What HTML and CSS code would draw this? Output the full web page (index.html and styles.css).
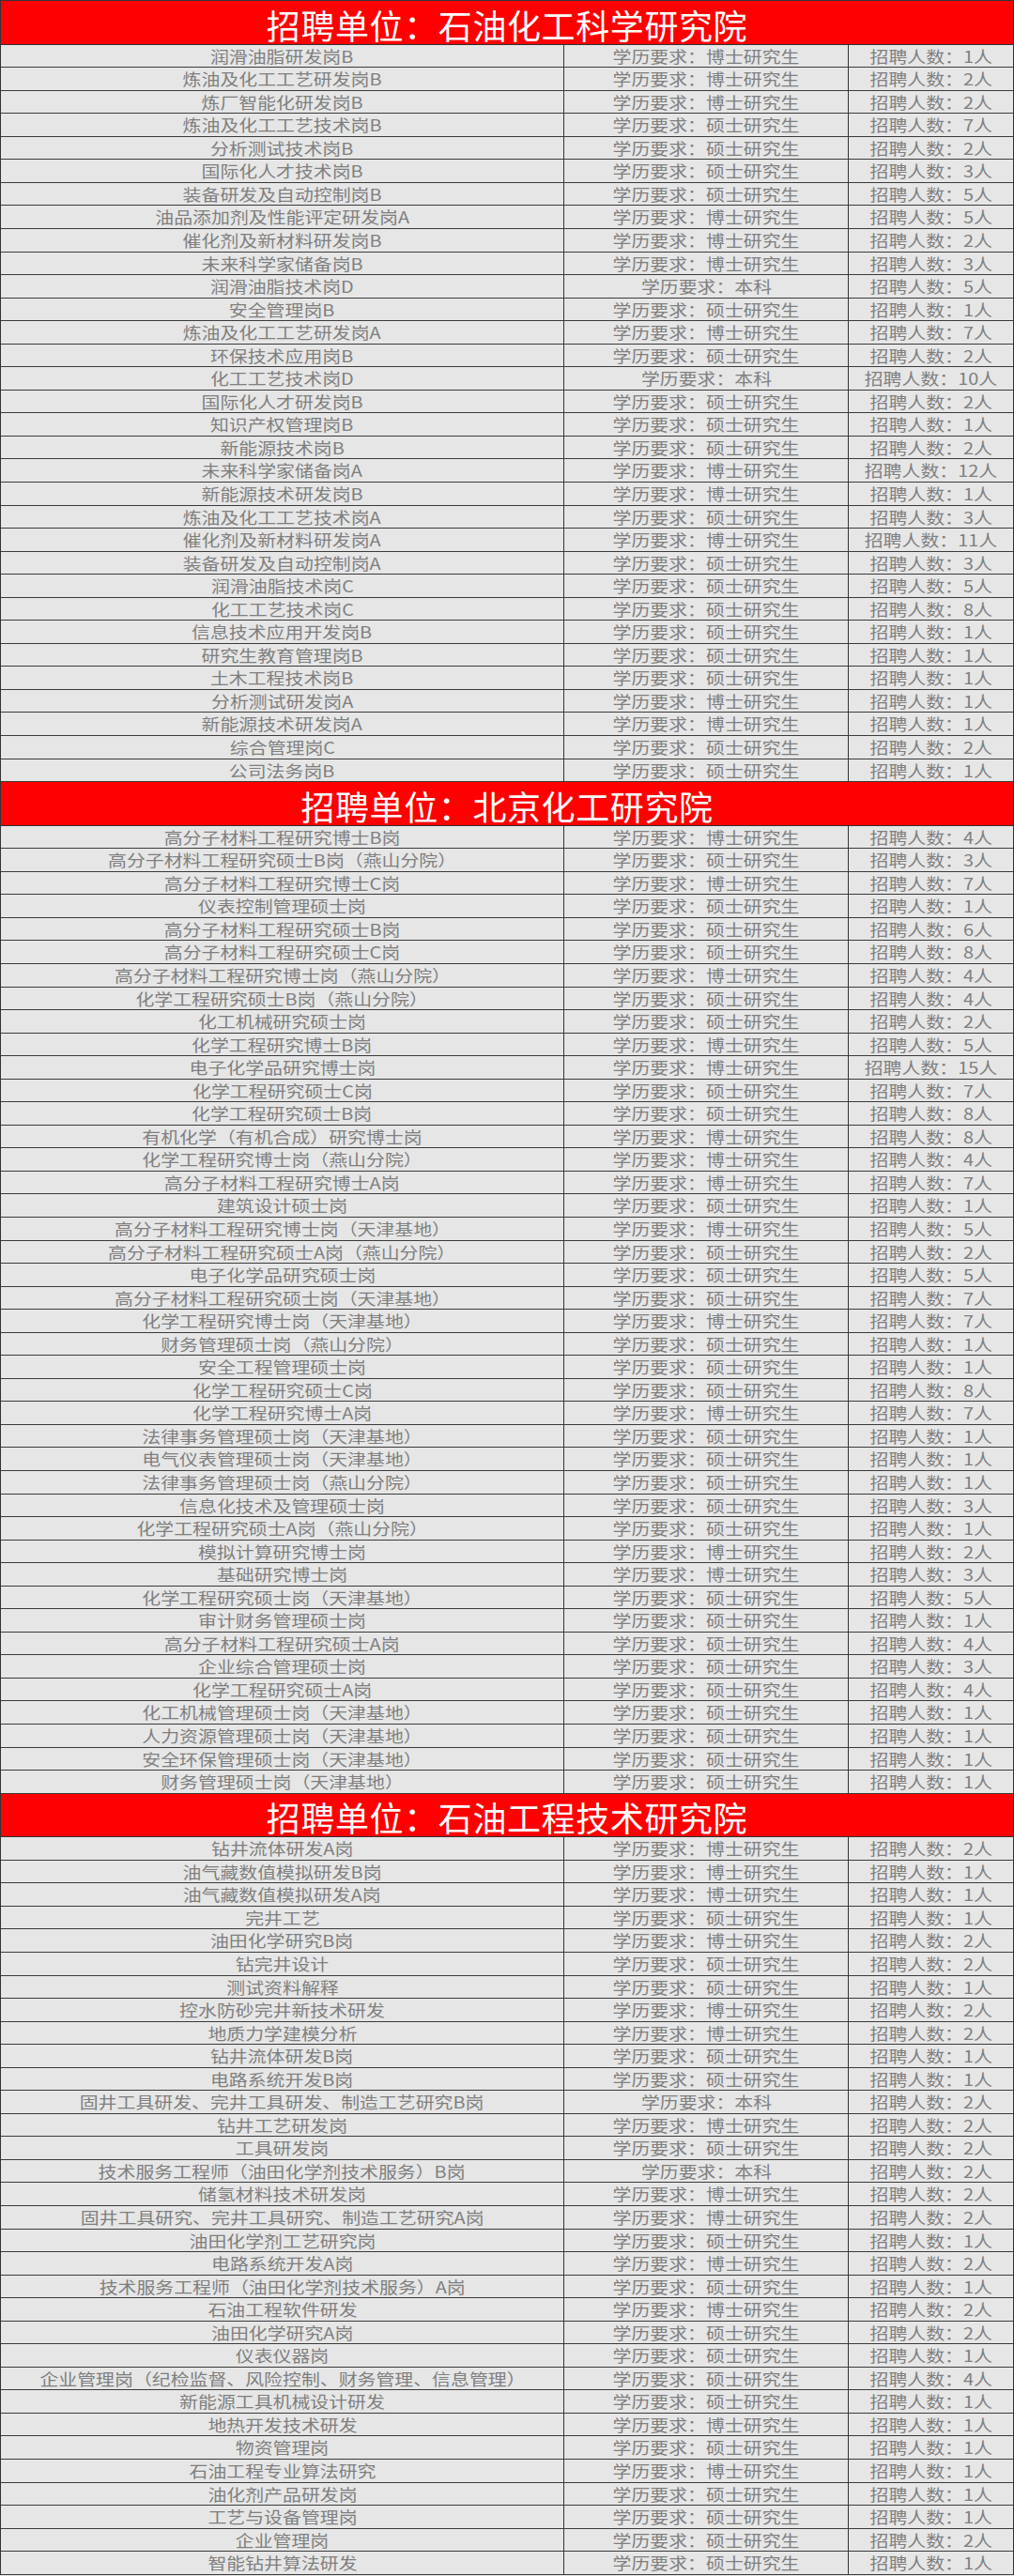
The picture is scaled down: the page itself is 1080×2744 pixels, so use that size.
FILE: index.html
```html
<!DOCTYPE html>
<html lang="zh-CN">
<head>
<meta charset="utf-8">
<title>招聘单位</title>
<link rel="stylesheet" href="styles.css">
</head>
<body>
<div class="sheet">
  <div class="head"><span>招聘单位：石油化工科学研究院</span></div>
  <div class="row"><div class="c1"><span>润滑油脂研发岗B</span></div><div class="c2"><span>学历要求：博士研究生</span></div><div class="c3"><span>招聘人数：1人</span></div></div>
  <div class="row"><div class="c1"><span>炼油及化工工艺研发岗B</span></div><div class="c2"><span>学历要求：博士研究生</span></div><div class="c3"><span>招聘人数：2人</span></div></div>
  <div class="row"><div class="c1"><span>炼厂智能化研发岗B</span></div><div class="c2"><span>学历要求：博士研究生</span></div><div class="c3"><span>招聘人数：2人</span></div></div>
  <div class="row"><div class="c1"><span>炼油及化工工艺技术岗B</span></div><div class="c2"><span>学历要求：硕士研究生</span></div><div class="c3"><span>招聘人数：7人</span></div></div>
  <div class="row"><div class="c1"><span>分析测试技术岗B</span></div><div class="c2"><span>学历要求：硕士研究生</span></div><div class="c3"><span>招聘人数：2人</span></div></div>
  <div class="row"><div class="c1"><span>国际化人才技术岗B</span></div><div class="c2"><span>学历要求：硕士研究生</span></div><div class="c3"><span>招聘人数：3人</span></div></div>
  <div class="row"><div class="c1"><span>装备研发及自动控制岗B</span></div><div class="c2"><span>学历要求：硕士研究生</span></div><div class="c3"><span>招聘人数：5人</span></div></div>
  <div class="row"><div class="c1"><span>油品添加剂及性能评定研发岗A</span></div><div class="c2"><span>学历要求：博士研究生</span></div><div class="c3"><span>招聘人数：5人</span></div></div>
  <div class="row"><div class="c1"><span>催化剂及新材料研发岗B</span></div><div class="c2"><span>学历要求：博士研究生</span></div><div class="c3"><span>招聘人数：2人</span></div></div>
  <div class="row"><div class="c1"><span>未来科学家储备岗B</span></div><div class="c2"><span>学历要求：博士研究生</span></div><div class="c3"><span>招聘人数：3人</span></div></div>
  <div class="row"><div class="c1"><span>润滑油脂技术岗D</span></div><div class="c2"><span>学历要求：本科</span></div><div class="c3"><span>招聘人数：5人</span></div></div>
  <div class="row"><div class="c1"><span>安全管理岗B</span></div><div class="c2"><span>学历要求：硕士研究生</span></div><div class="c3"><span>招聘人数：1人</span></div></div>
  <div class="row"><div class="c1"><span>炼油及化工工艺研发岗A</span></div><div class="c2"><span>学历要求：博士研究生</span></div><div class="c3"><span>招聘人数：7人</span></div></div>
  <div class="row"><div class="c1"><span>环保技术应用岗B</span></div><div class="c2"><span>学历要求：硕士研究生</span></div><div class="c3"><span>招聘人数：2人</span></div></div>
  <div class="row"><div class="c1"><span>化工工艺技术岗D</span></div><div class="c2"><span>学历要求：本科</span></div><div class="c3"><span>招聘人数：10人</span></div></div>
  <div class="row"><div class="c1"><span>国际化人才研发岗B</span></div><div class="c2"><span>学历要求：硕士研究生</span></div><div class="c3"><span>招聘人数：2人</span></div></div>
  <div class="row"><div class="c1"><span>知识产权管理岗B</span></div><div class="c2"><span>学历要求：硕士研究生</span></div><div class="c3"><span>招聘人数：1人</span></div></div>
  <div class="row"><div class="c1"><span>新能源技术岗B</span></div><div class="c2"><span>学历要求：硕士研究生</span></div><div class="c3"><span>招聘人数：2人</span></div></div>
  <div class="row"><div class="c1"><span>未来科学家储备岗A</span></div><div class="c2"><span>学历要求：博士研究生</span></div><div class="c3"><span>招聘人数：12人</span></div></div>
  <div class="row"><div class="c1"><span>新能源技术研发岗B</span></div><div class="c2"><span>学历要求：博士研究生</span></div><div class="c3"><span>招聘人数：1人</span></div></div>
  <div class="row"><div class="c1"><span>炼油及化工工艺技术岗A</span></div><div class="c2"><span>学历要求：硕士研究生</span></div><div class="c3"><span>招聘人数：3人</span></div></div>
  <div class="row"><div class="c1"><span>催化剂及新材料研发岗A</span></div><div class="c2"><span>学历要求：博士研究生</span></div><div class="c3"><span>招聘人数：11人</span></div></div>
  <div class="row"><div class="c1"><span>装备研发及自动控制岗A</span></div><div class="c2"><span>学历要求：硕士研究生</span></div><div class="c3"><span>招聘人数：3人</span></div></div>
  <div class="row"><div class="c1"><span>润滑油脂技术岗C</span></div><div class="c2"><span>学历要求：硕士研究生</span></div><div class="c3"><span>招聘人数：5人</span></div></div>
  <div class="row"><div class="c1"><span>化工工艺技术岗C</span></div><div class="c2"><span>学历要求：硕士研究生</span></div><div class="c3"><span>招聘人数：8人</span></div></div>
  <div class="row"><div class="c1"><span>信息技术应用开发岗B</span></div><div class="c2"><span>学历要求：硕士研究生</span></div><div class="c3"><span>招聘人数：1人</span></div></div>
  <div class="row"><div class="c1"><span>研究生教育管理岗B</span></div><div class="c2"><span>学历要求：硕士研究生</span></div><div class="c3"><span>招聘人数：1人</span></div></div>
  <div class="row"><div class="c1"><span>土木工程技术岗B</span></div><div class="c2"><span>学历要求：硕士研究生</span></div><div class="c3"><span>招聘人数：1人</span></div></div>
  <div class="row"><div class="c1"><span>分析测试研发岗A</span></div><div class="c2"><span>学历要求：博士研究生</span></div><div class="c3"><span>招聘人数：1人</span></div></div>
  <div class="row"><div class="c1"><span>新能源技术研发岗A</span></div><div class="c2"><span>学历要求：博士研究生</span></div><div class="c3"><span>招聘人数：1人</span></div></div>
  <div class="row"><div class="c1"><span>综合管理岗C</span></div><div class="c2"><span>学历要求：硕士研究生</span></div><div class="c3"><span>招聘人数：2人</span></div></div>
  <div class="row"><div class="c1"><span>公司法务岗B</span></div><div class="c2"><span>学历要求：硕士研究生</span></div><div class="c3"><span>招聘人数：1人</span></div></div>

  <div class="head"><span>招聘单位：北京化工研究院</span></div>
  <div class="row"><div class="c1"><span>高分子材料工程研究博士B岗</span></div><div class="c2"><span>学历要求：博士研究生</span></div><div class="c3"><span>招聘人数：4人</span></div></div>
  <div class="row"><div class="c1"><span>高分子材料工程研究硕士B岗（燕山分院）</span></div><div class="c2"><span>学历要求：硕士研究生</span></div><div class="c3"><span>招聘人数：3人</span></div></div>
  <div class="row"><div class="c1"><span>高分子材料工程研究博士C岗</span></div><div class="c2"><span>学历要求：博士研究生</span></div><div class="c3"><span>招聘人数：7人</span></div></div>
  <div class="row"><div class="c1"><span>仪表控制管理硕士岗</span></div><div class="c2"><span>学历要求：硕士研究生</span></div><div class="c3"><span>招聘人数：1人</span></div></div>
  <div class="row"><div class="c1"><span>高分子材料工程研究硕士B岗</span></div><div class="c2"><span>学历要求：硕士研究生</span></div><div class="c3"><span>招聘人数：6人</span></div></div>
  <div class="row"><div class="c1"><span>高分子材料工程研究硕士C岗</span></div><div class="c2"><span>学历要求：硕士研究生</span></div><div class="c3"><span>招聘人数：8人</span></div></div>
  <div class="row"><div class="c1"><span>高分子材料工程研究博士岗（燕山分院）</span></div><div class="c2"><span>学历要求：博士研究生</span></div><div class="c3"><span>招聘人数：4人</span></div></div>
  <div class="row"><div class="c1"><span>化学工程研究硕士B岗（燕山分院）</span></div><div class="c2"><span>学历要求：硕士研究生</span></div><div class="c3"><span>招聘人数：4人</span></div></div>
  <div class="row"><div class="c1"><span>化工机械研究硕士岗</span></div><div class="c2"><span>学历要求：硕士研究生</span></div><div class="c3"><span>招聘人数：2人</span></div></div>
  <div class="row"><div class="c1"><span>化学工程研究博士B岗</span></div><div class="c2"><span>学历要求：博士研究生</span></div><div class="c3"><span>招聘人数：5人</span></div></div>
  <div class="row"><div class="c1"><span>电子化学品研究博士岗</span></div><div class="c2"><span>学历要求：博士研究生</span></div><div class="c3"><span>招聘人数：15人</span></div></div>
  <div class="row"><div class="c1"><span>化学工程研究硕士C岗</span></div><div class="c2"><span>学历要求：硕士研究生</span></div><div class="c3"><span>招聘人数：7人</span></div></div>
  <div class="row"><div class="c1"><span>化学工程研究硕士B岗</span></div><div class="c2"><span>学历要求：硕士研究生</span></div><div class="c3"><span>招聘人数：8人</span></div></div>
  <div class="row"><div class="c1"><span>有机化学（有机合成）研究博士岗</span></div><div class="c2"><span>学历要求：博士研究生</span></div><div class="c3"><span>招聘人数：8人</span></div></div>
  <div class="row"><div class="c1"><span>化学工程研究博士岗（燕山分院）</span></div><div class="c2"><span>学历要求：博士研究生</span></div><div class="c3"><span>招聘人数：4人</span></div></div>
  <div class="row"><div class="c1"><span>高分子材料工程研究博士A岗</span></div><div class="c2"><span>学历要求：博士研究生</span></div><div class="c3"><span>招聘人数：7人</span></div></div>
  <div class="row"><div class="c1"><span>建筑设计硕士岗</span></div><div class="c2"><span>学历要求：硕士研究生</span></div><div class="c3"><span>招聘人数：1人</span></div></div>
  <div class="row"><div class="c1"><span>高分子材料工程研究博士岗（天津基地）</span></div><div class="c2"><span>学历要求：博士研究生</span></div><div class="c3"><span>招聘人数：5人</span></div></div>
  <div class="row"><div class="c1"><span>高分子材料工程研究硕士A岗（燕山分院）</span></div><div class="c2"><span>学历要求：硕士研究生</span></div><div class="c3"><span>招聘人数：2人</span></div></div>
  <div class="row"><div class="c1"><span>电子化学品研究硕士岗</span></div><div class="c2"><span>学历要求：硕士研究生</span></div><div class="c3"><span>招聘人数：5人</span></div></div>
  <div class="row"><div class="c1"><span>高分子材料工程研究硕士岗（天津基地）</span></div><div class="c2"><span>学历要求：硕士研究生</span></div><div class="c3"><span>招聘人数：7人</span></div></div>
  <div class="row"><div class="c1"><span>化学工程研究博士岗（天津基地）</span></div><div class="c2"><span>学历要求：博士研究生</span></div><div class="c3"><span>招聘人数：7人</span></div></div>
  <div class="row"><div class="c1"><span>财务管理硕士岗（燕山分院）</span></div><div class="c2"><span>学历要求：硕士研究生</span></div><div class="c3"><span>招聘人数：1人</span></div></div>
  <div class="row"><div class="c1"><span>安全工程管理硕士岗</span></div><div class="c2"><span>学历要求：硕士研究生</span></div><div class="c3"><span>招聘人数：1人</span></div></div>
  <div class="row"><div class="c1"><span>化学工程研究硕士C岗</span></div><div class="c2"><span>学历要求：硕士研究生</span></div><div class="c3"><span>招聘人数：8人</span></div></div>
  <div class="row"><div class="c1"><span>化学工程研究博士A岗</span></div><div class="c2"><span>学历要求：博士研究生</span></div><div class="c3"><span>招聘人数：7人</span></div></div>
  <div class="row"><div class="c1"><span>法律事务管理硕士岗（天津基地）</span></div><div class="c2"><span>学历要求：硕士研究生</span></div><div class="c3"><span>招聘人数：1人</span></div></div>
  <div class="row"><div class="c1"><span>电气仪表管理硕士岗（天津基地）</span></div><div class="c2"><span>学历要求：硕士研究生</span></div><div class="c3"><span>招聘人数：1人</span></div></div>
  <div class="row"><div class="c1"><span>法律事务管理硕士岗（燕山分院）</span></div><div class="c2"><span>学历要求：硕士研究生</span></div><div class="c3"><span>招聘人数：1人</span></div></div>
  <div class="row"><div class="c1"><span>信息化技术及管理硕士岗</span></div><div class="c2"><span>学历要求：硕士研究生</span></div><div class="c3"><span>招聘人数：3人</span></div></div>
  <div class="row"><div class="c1"><span>化学工程研究硕士A岗（燕山分院）</span></div><div class="c2"><span>学历要求：硕士研究生</span></div><div class="c3"><span>招聘人数：1人</span></div></div>
  <div class="row"><div class="c1"><span>模拟计算研究博士岗</span></div><div class="c2"><span>学历要求：博士研究生</span></div><div class="c3"><span>招聘人数：2人</span></div></div>
  <div class="row"><div class="c1"><span>基础研究博士岗</span></div><div class="c2"><span>学历要求：博士研究生</span></div><div class="c3"><span>招聘人数：3人</span></div></div>
  <div class="row"><div class="c1"><span>化学工程研究硕士岗（天津基地）</span></div><div class="c2"><span>学历要求：硕士研究生</span></div><div class="c3"><span>招聘人数：5人</span></div></div>
  <div class="row"><div class="c1"><span>审计财务管理硕士岗</span></div><div class="c2"><span>学历要求：硕士研究生</span></div><div class="c3"><span>招聘人数：1人</span></div></div>
  <div class="row"><div class="c1"><span>高分子材料工程研究硕士A岗</span></div><div class="c2"><span>学历要求：硕士研究生</span></div><div class="c3"><span>招聘人数：4人</span></div></div>
  <div class="row"><div class="c1"><span>企业综合管理硕士岗</span></div><div class="c2"><span>学历要求：硕士研究生</span></div><div class="c3"><span>招聘人数：3人</span></div></div>
  <div class="row"><div class="c1"><span>化学工程研究硕士A岗</span></div><div class="c2"><span>学历要求：硕士研究生</span></div><div class="c3"><span>招聘人数：4人</span></div></div>
  <div class="row"><div class="c1"><span>化工机械管理硕士岗（天津基地）</span></div><div class="c2"><span>学历要求：硕士研究生</span></div><div class="c3"><span>招聘人数：1人</span></div></div>
  <div class="row"><div class="c1"><span>人力资源管理硕士岗（天津基地）</span></div><div class="c2"><span>学历要求：硕士研究生</span></div><div class="c3"><span>招聘人数：1人</span></div></div>
  <div class="row"><div class="c1"><span>安全环保管理硕士岗（天津基地）</span></div><div class="c2"><span>学历要求：硕士研究生</span></div><div class="c3"><span>招聘人数：1人</span></div></div>
  <div class="row"><div class="c1"><span>财务管理硕士岗（天津基地）</span></div><div class="c2"><span>学历要求：硕士研究生</span></div><div class="c3"><span>招聘人数：1人</span></div></div>

  <div class="head"><span>招聘单位：石油工程技术研究院</span></div>
  <div class="row"><div class="c1"><span>钻井流体研发A岗</span></div><div class="c2"><span>学历要求：博士研究生</span></div><div class="c3"><span>招聘人数：2人</span></div></div>
  <div class="row"><div class="c1"><span>油气藏数值模拟研发B岗</span></div><div class="c2"><span>学历要求：博士研究生</span></div><div class="c3"><span>招聘人数：1人</span></div></div>
  <div class="row"><div class="c1"><span>油气藏数值模拟研发A岗</span></div><div class="c2"><span>学历要求：博士研究生</span></div><div class="c3"><span>招聘人数：1人</span></div></div>
  <div class="row"><div class="c1"><span>完井工艺</span></div><div class="c2"><span>学历要求：硕士研究生</span></div><div class="c3"><span>招聘人数：1人</span></div></div>
  <div class="row"><div class="c1"><span>油田化学研究B岗</span></div><div class="c2"><span>学历要求：博士研究生</span></div><div class="c3"><span>招聘人数：2人</span></div></div>
  <div class="row"><div class="c1"><span>钻完井设计</span></div><div class="c2"><span>学历要求：硕士研究生</span></div><div class="c3"><span>招聘人数：2人</span></div></div>
  <div class="row"><div class="c1"><span>测试资料解释</span></div><div class="c2"><span>学历要求：硕士研究生</span></div><div class="c3"><span>招聘人数：1人</span></div></div>
  <div class="row"><div class="c1"><span>控水防砂完井新技术研发</span></div><div class="c2"><span>学历要求：博士研究生</span></div><div class="c3"><span>招聘人数：2人</span></div></div>
  <div class="row"><div class="c1"><span>地质力学建模分析</span></div><div class="c2"><span>学历要求：博士研究生</span></div><div class="c3"><span>招聘人数：2人</span></div></div>
  <div class="row"><div class="c1"><span>钻井流体研发B岗</span></div><div class="c2"><span>学历要求：硕士研究生</span></div><div class="c3"><span>招聘人数：1人</span></div></div>
  <div class="row"><div class="c1"><span>电路系统开发B岗</span></div><div class="c2"><span>学历要求：硕士研究生</span></div><div class="c3"><span>招聘人数：1人</span></div></div>
  <div class="row"><div class="c1"><span>固井工具研发、完井工具研发、制造工艺研究B岗</span></div><div class="c2"><span>学历要求：本科</span></div><div class="c3"><span>招聘人数：2人</span></div></div>
  <div class="row"><div class="c1"><span>钻井工艺研发岗</span></div><div class="c2"><span>学历要求：博士研究生</span></div><div class="c3"><span>招聘人数：2人</span></div></div>
  <div class="row"><div class="c1"><span>工具研发岗</span></div><div class="c2"><span>学历要求：硕士研究生</span></div><div class="c3"><span>招聘人数：2人</span></div></div>
  <div class="row"><div class="c1"><span>技术服务工程师（油田化学剂技术服务）B岗</span></div><div class="c2"><span>学历要求：本科</span></div><div class="c3"><span>招聘人数：2人</span></div></div>
  <div class="row"><div class="c1"><span>储氢材料技术研发岗</span></div><div class="c2"><span>学历要求：博士研究生</span></div><div class="c3"><span>招聘人数：2人</span></div></div>
  <div class="row"><div class="c1"><span>固井工具研究、完井工具研究、制造工艺研究A岗</span></div><div class="c2"><span>学历要求：博士研究生</span></div><div class="c3"><span>招聘人数：2人</span></div></div>
  <div class="row"><div class="c1"><span>油田化学剂工艺研究岗</span></div><div class="c2"><span>学历要求：硕士研究生</span></div><div class="c3"><span>招聘人数：1人</span></div></div>
  <div class="row"><div class="c1"><span>电路系统开发A岗</span></div><div class="c2"><span>学历要求：博士研究生</span></div><div class="c3"><span>招聘人数：2人</span></div></div>
  <div class="row"><div class="c1"><span>技术服务工程师（油田化学剂技术服务）A岗</span></div><div class="c2"><span>学历要求：硕士研究生</span></div><div class="c3"><span>招聘人数：1人</span></div></div>
  <div class="row"><div class="c1"><span>石油工程软件研发</span></div><div class="c2"><span>学历要求：博士研究生</span></div><div class="c3"><span>招聘人数：2人</span></div></div>
  <div class="row"><div class="c1"><span>油田化学研究A岗</span></div><div class="c2"><span>学历要求：硕士研究生</span></div><div class="c3"><span>招聘人数：2人</span></div></div>
  <div class="row"><div class="c1"><span>仪表仪器岗</span></div><div class="c2"><span>学历要求：硕士研究生</span></div><div class="c3"><span>招聘人数：1人</span></div></div>
  <div class="row"><div class="c1"><span>企业管理岗（纪检监督、风险控制、财务管理、信息管理）</span></div><div class="c2"><span>学历要求：硕士研究生</span></div><div class="c3"><span>招聘人数：4人</span></div></div>
  <div class="row"><div class="c1"><span>新能源工具机械设计研发</span></div><div class="c2"><span>学历要求：硕士研究生</span></div><div class="c3"><span>招聘人数：1人</span></div></div>
  <div class="row"><div class="c1"><span>地热开发技术研发</span></div><div class="c2"><span>学历要求：博士研究生</span></div><div class="c3"><span>招聘人数：1人</span></div></div>
  <div class="row"><div class="c1"><span>物资管理岗</span></div><div class="c2"><span>学历要求：硕士研究生</span></div><div class="c3"><span>招聘人数：1人</span></div></div>
  <div class="row"><div class="c1"><span>石油工程专业算法研究</span></div><div class="c2"><span>学历要求：博士研究生</span></div><div class="c3"><span>招聘人数：1人</span></div></div>
  <div class="row"><div class="c1"><span>油化剂产品研发岗</span></div><div class="c2"><span>学历要求：硕士研究生</span></div><div class="c3"><span>招聘人数：1人</span></div></div>
  <div class="row"><div class="c1"><span>工艺与设备管理岗</span></div><div class="c2"><span>学历要求：硕士研究生</span></div><div class="c3"><span>招聘人数：1人</span></div></div>
  <div class="row"><div class="c1"><span>企业管理岗</span></div><div class="c2"><span>学历要求：硕士研究生</span></div><div class="c3"><span>招聘人数：2人</span></div></div>
  <div class="row"><div class="c1"><span>智能钻井算法研发</span></div><div class="c2"><span>学历要求：硕士研究生</span></div><div class="c3"><span>招聘人数：1人</span></div></div>
</div>
</body>
</html>
```

FILE: styles.css
```css
html, body {
  margin: 0;
  padding: 0;
  background: #e6e6e6;
}

.sheet {
  width: 1080px;
  box-sizing: border-box;
  border-top: 1px solid #333;
  border-left: 1px solid #333;
  border-right: 1px solid #333;
  font-family: "Noto Sans CJK SC", "Noto Sans", sans-serif;
  background: #e6e6e6;
}

.head {
  display: flex;
  align-items: center;
  justify-content: center;
  height: 46.6px;
  box-sizing: border-box;
  border-bottom: 1px solid #333;
  padding-top: 4px;
  background: #ff0000;
  color: #ffffff;
  font-size: 36px;
  letter-spacing: 0.6px;
  line-height: 1;
  white-space: nowrap;
}

.row {
  display: grid;
  grid-template-columns: 599px 303px 1fr;
  height: 24.56px;
  box-sizing: border-box;
  border-bottom: 1px solid #3a3a3a;
  color: #7f7f7f;
  font-size: 17px;
  line-height: 23px;
}

.c1, .c2, .c3 {
  text-align: center;
  white-space: nowrap;
}

.c2, .c3 {
  border-left: 1px solid #333;
}

.row span {
  display: inline-block;
  transform: scaleX(1.17);
  transform-origin: center;
}
```
